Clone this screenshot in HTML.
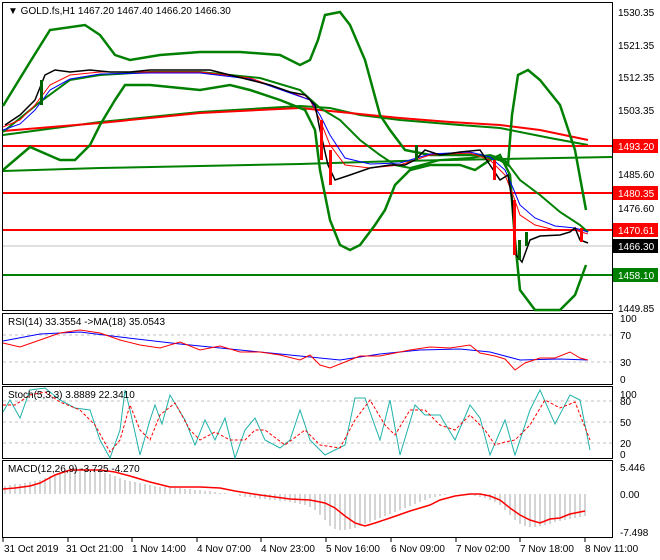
<!DOCTYPE html>
<html><head><meta charset="utf-8"><style>
body{margin:0;background:#fff;}
svg{display:block;font-family:"Liberation Sans",sans-serif;font-size:10px;}
</style></head><body>
<svg width="660" height="560" viewBox="0 0 660 560" xmlns="http://www.w3.org/2000/svg">
<rect width="660" height="560" fill="#fff"/>
<!-- frames -->
<g fill="none" stroke="#000" stroke-width="1">
<rect x="2.5" y="2.5" width="610" height="308"/>
<rect x="2.5" y="313.5" width="610" height="71"/>
<rect x="2.5" y="386.5" width="610" height="72"/>
<rect x="2.5" y="460.5" width="610" height="77"/>
</g>
<!-- main chart -->
<g fill="none">
<polyline stroke="#008000" stroke-width="2" points="3,171 100,168 200,166 300,164 400,161 500,159 612,157"/>
<polyline stroke="#008000" stroke-width="2" points="3,135 100,122 200,112 300,106 330,108 360,115 400,120 460,125 500,128 550,138 588,145"/>
<polyline stroke="#ff0000" stroke-width="2" points="3,131 100,123 200,113 300,108 350,113 400,118 450,122 500,125 540,130 588,140"/>
<line x1="3" y1="146" x2="612" y2="146" stroke="#ff0000" stroke-width="2"/>
<line x1="3" y1="193" x2="612" y2="193" stroke="#ff0000" stroke-width="2"/>
<line x1="3" y1="230" x2="612" y2="230" stroke="#ff0000" stroke-width="2"/>
<line x1="3" y1="275" x2="612" y2="275" stroke="#008000" stroke-width="2"/>
<line x1="3" y1="246" x2="612" y2="246" stroke="#c0c0c0" stroke-width="1"/>
<polyline stroke="#008000" stroke-width="2.5" points="3,106 30,62 50,30 85,25 100,35 115,55 130,60 160,55 200,52 240,52 280,55 300,65 310,60 318,40 325,15 340,12 350,25 365,60 380,115 390,130 405,150 430,155 460,155 480,155 500,160 508,165 512,115 518,75 528,70 540,80 560,105 575,150 586,210"/>
<polyline stroke="#008000" stroke-width="2.5" points="3,170 30,147 60,160 75,160 90,145 100,125 115,100 125,85 150,85 200,90 230,85 250,90 280,100 305,110 315,130 320,170 330,220 340,245 350,250 360,245 375,225 385,210 395,185 410,170 430,165 460,165 475,170 490,160 500,155 510,175 515,240 520,290 535,310 560,310 575,295 586,265"/>
<polyline stroke="#008000" stroke-width="2" points="3,132 40,102 70,80 100,75 150,72 200,72 260,78 300,90 320,108 340,120 360,140 380,155 395,165 410,168 440,160 470,158 490,155 505,160 520,180 540,195 560,212 580,225 588,232"/>
<polyline stroke="#ff0000" stroke-width="1" points="3,127 20,120 35,105 50,85 70,75 100,72 150,72 200,72 250,78 290,92 310,100 320,120 330,145 345,165 370,168 400,165 430,155 470,153 490,160 505,175 513,195 520,215 535,225 555,230 575,230 588,234"/>
<polyline stroke="#0000ff" stroke-width="1" points="3,130 20,124 35,110 50,90 70,79 100,74 150,73 200,73 250,79 290,93 310,100 320,115 330,135 345,158 370,164 400,163 430,154 470,152 490,157 505,170 513,188 520,205 535,218 555,226 575,228 588,232"/>
<polyline stroke="#000" stroke-width="1.5" points="5,125 20,115 35,100 45,75 55,70 70,72 90,70 110,72 130,72 150,70 170,70 190,70 210,70 230,75 250,80 270,85 290,92 305,95 315,105 320,130 328,165 335,180 350,175 370,168 390,165 405,165 415,160 425,150 440,155 460,152 480,150 490,165 500,180 508,175 512,200 516,255 522,262 530,240 540,236 560,235 570,232 575,228 580,240 588,243"/>
</g>
<g fill="#ff0000"><rect x="513" y="200" width="3" height="55"/><rect x="320" y="120" width="3" height="40"/><rect x="329" y="150" width="3" height="35"/><rect x="580" y="228" width="3" height="14"/><rect x="493" y="160" width="3" height="20"/></g>
<g fill="#006400"><rect x="518" y="240" width="3" height="20"/><rect x="525" y="232" width="3" height="14"/><rect x="40" y="80" width="3" height="25"/><rect x="415" y="145" width="3" height="15"/></g>
<text x="8" y="14" font-size="10">▼ GOLD.fs,H1  1467.20 1467.40 1466.20 1466.30</text>
<!-- price axis -->
<g font-size="10" fill="#000">
<text x="618" y="16">1530.35</text><text x="618" y="49">1521.35</text><text x="618" y="81">1512.35</text><text x="618" y="114">1503.35</text>
<text x="618" y="178">1485.60</text><text x="618" y="212">1476.60</text><text x="618" y="312">1449.85</text>
</g>
<rect x="613" y="139" width="45" height="14" fill="#ff0000"/><text x="618" y="150" fill="#fff">1493.20</text>
<rect x="613" y="186" width="45" height="14" fill="#ff0000"/><text x="618" y="197" fill="#fff">1480.35</text>
<rect x="613" y="223" width="45" height="14" fill="#ff0000"/><text x="618" y="234" fill="#fff">1470.61</text>
<rect x="613" y="239" width="45" height="14" fill="#000"/><text x="618" y="250" fill="#fff">1466.30</text>
<rect x="613" y="268" width="45" height="14" fill="#008000"/><text x="618" y="279" fill="#fff">1458.10</text>
<!-- RSI -->
<g stroke="#c0c0c0" stroke-dasharray="3,3"><line x1="3" y1="335" x2="612" y2="335"/><line x1="3" y1="362" x2="612" y2="362"/></g>
<polyline fill="none" stroke="#0000ff" points="3,341 40,334 80,332 120,337 180,344 240,350 300,356 340,360 380,354 420,350 460,349 490,352 520,360 560,359 588,360"/>
<polyline fill="none" stroke="#ff0000" points="3,343 20,347 40,340 60,333 80,330 100,333 120,340 140,345 160,348 180,342 200,350 220,346 240,352 260,352 280,355 300,360 310,355 320,365 330,368 345,362 360,356 380,356 395,353 410,350 430,347 450,348 470,345 480,353 495,356 505,359 515,370 525,363 540,358 555,358 570,352 580,358 588,360"/>
<text x="8" y="325">RSI(14) 33.3554  -&gt;MA(18) 35.0543</text>
<g font-size="10"><text x="620" y="322">100</text><text x="620" y="339">70</text><text x="620" y="366">30</text><text x="620" y="383">0</text></g>
<!-- Stoch -->
<g stroke="#c0c0c0" stroke-dasharray="3,3"><line x1="3" y1="401" x2="612" y2="401"/><line x1="3" y1="422" x2="612" y2="422"/><line x1="3" y1="443" x2="612" y2="443"/></g>
<polyline fill="none" stroke="#20b2aa" points="3,412 10,400 20,418 30,390 45,388 60,400 75,408 90,410 100,440 110,458 120,430 125,390 130,410 140,455 150,420 155,405 162,424 170,395 185,420 195,445 205,420 215,440 225,418 235,458 245,430 255,418 265,440 280,448 290,440 300,410 310,440 325,455 345,445 355,398 365,398 380,440 390,400 400,455 415,405 425,415 440,415 455,440 470,405 480,418 490,455 505,420 515,455 530,410 540,390 555,424 570,395 580,400 590,450"/>
<polyline fill="none" stroke="#ff0000" stroke-dasharray="3,2" points="3,405 15,405 30,395 45,392 60,402 80,410 95,425 110,452 120,440 130,405 140,430 150,440 160,415 175,403 190,430 200,440 215,432 230,440 245,440 255,430 265,430 285,445 305,430 320,445 340,448 355,420 370,400 385,425 395,435 410,410 425,410 440,425 455,430 470,415 485,430 495,445 505,442 515,440 530,425 545,400 560,408 575,402 590,440"/>
<text x="8" y="398">Stoch(5,3,3) 3.8889 22.3410</text>
<g font-size="10"><text x="620" y="398">100</text><text x="620" y="405">80</text><text x="620" y="426">50</text><text x="620" y="447">20</text><text x="620" y="458">0</text></g>
<!-- MACD -->
<g stroke="#a9a9a9" stroke-width="1">
<path d="M5 494V486M10 494V485M15 494V484M20 494V484M25 494V483M30 494V482M35 494V481M40 494V480M45 494V478M50 494V476M55 494V474M60 494V472M65 494V470M70 494V469M75 494V468M80 494V468M85 494V469M90 494V470M95 494V471M100 494V472M105 494V473M110 494V474M115 494V476M120 494V478M125 494V480M130 494V481M135 494V482M140 494V483M145 494V484M150 494V485M155 494V486M160 494V487M165 494V487M170 494V488M175 494V488M180 494V488M185 494V489M190 494V489M195 494V490M200 494V490M205 494V491M210 494V491M215 494V492M220 494V493M225 494V493M230 494V494M240 494V496M245 494V497M250 494V497M255 494V498M260 494V499M265 494V499M270 494V500M275 494V500M280 494V501M285 494V501M290 494V502M295 494V503M300 494V504M305 494V505M310 494V507M315 494V510M320 494V515M325 494V520M330 494V526M335 494V529M340 494V530M345 494V530M350 494V529M355 494V528M360 494V526M365 494V524M370 494V522M375 494V520M380 494V518M385 494V516M390 494V514M395 494V512M400 494V510M405 494V508M410 494V506M415 494V504M420 494V502M425 494V500M430 494V498M435 494V497M440 494V496M445 494V495M470 494V495M475 494V496M480 494V497M485 494V498M490 494V500M495 494V502M500 494V505M505 494V510M510 494V515M515 494V520M520 494V524M525 494V526M530 494V527M535 494V527M540 494V526M545 494V525M550 494V524M555 494V522M560 494V521M565 494V520M570 494V519M575 494V518M580 494V517M585 494V516"/>
</g>
<polyline fill="none" stroke="#ff0000" stroke-width="1.5" points="3,489 15,488 30,486 40,483 55,475 70,470 85,470 100,470 115,472 130,476 150,482 170,487 200,487 220,488 235,491 260,495 290,499 310,500 325,503 335,508 345,516 355,523 365,526 375,523 390,518 410,511 430,505 440,500 455,496 470,494 480,494 490,496 500,500 510,508 520,515 530,520 540,523 550,519 560,518 570,514 585,511"/>
<text x="8" y="472">MACD(12,26,9) -3.725 -4.270</text>
<g font-size="10"><text x="620" y="471">5.446</text><text x="620" y="498">0.00</text><text x="620" y="536">-7.498</text></g>
<!-- time axis -->
<g stroke="#000"><path d="M3 538v4M68 538v4M132 538v4M197 538v4M261 538v4M326 538v4M391 538v4M456 538v4M520 538v4M585 538v4"/></g>
<g font-size="10"><text x="4" y="552">31 Oct 2019</text><text x="66" y="552">31 Oct 21:00</text><text x="132" y="552">1 Nov 14:00</text><text x="197" y="552">4 Nov 07:00</text><text x="261" y="552">4 Nov 23:00</text><text x="326" y="552">5 Nov 16:00</text><text x="391" y="552">6 Nov 09:00</text><text x="456" y="552">7 Nov 02:00</text><text x="520" y="552">7 Nov 18:00</text><text x="585" y="552">8 Nov 11:00</text></g>
</svg>
</body></html>
